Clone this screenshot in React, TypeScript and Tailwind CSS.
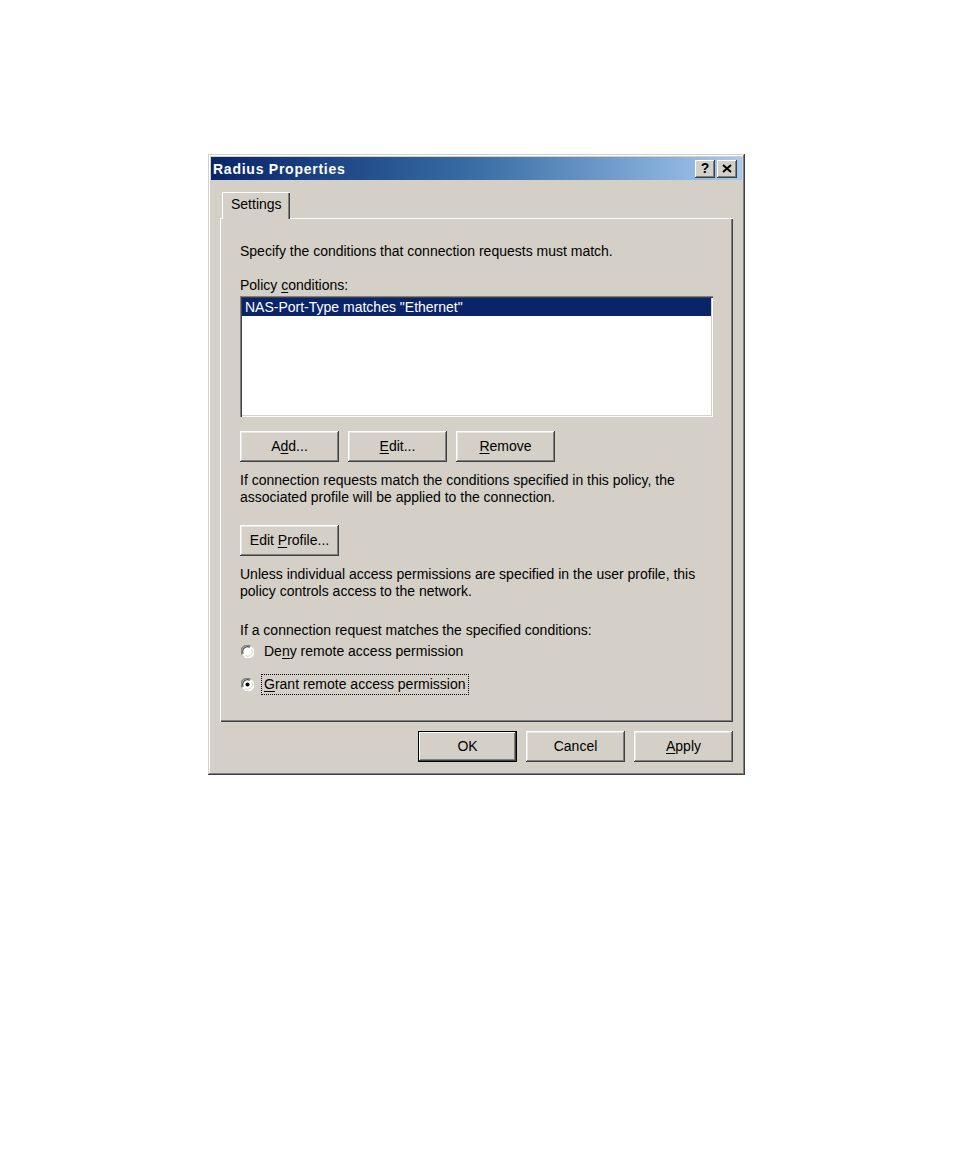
import React from "react";

const font = { fontFamily: '"Liberation Sans", Arial, sans-serif' };

function Btn({
  children,
  w = "w-[99px]",
  def = false,
}: {
  children: React.ReactNode;
  w?: string;
  def?: boolean;
}) {
  return (
    <div
      className={`${w} h-[31px] flex items-center justify-center bg-[#d4d0c8] text-[14px] leading-[17px] text-black ${
        def
          ? "border border-black shadow-[inset_-1px_-1px_#404040,inset_1px_1px_#fff,inset_-2px_-2px_#808080]"
          : "shadow-[inset_-1px_-1px_#404040,inset_1px_1px_#fff,inset_-2px_-2px_#808080,inset_2px_2px_#e8e6e2]"
      }`}
    >
      <span>{children}</span>
    </div>
  );
}

function Radio({ checked }: { checked?: boolean }) {
  return (
    <svg width="13" height="13" viewBox="0 0 13 13" className="shrink-0">
      <circle cx="6.5" cy="6.5" r="6" fill="#ffffff" />
      <path d="M1.2 9.5 A6 6 0 0 1 9.5 1.2" stroke="#808080" strokeWidth="1.3" fill="none" />
      <path d="M2.3 8.8 A4.8 4.8 0 0 1 8.8 2.3" stroke="#404040" strokeWidth="1.1" fill="none" />
      <path d="M11.8 3.5 A6 6 0 0 1 3.5 11.8" stroke="#ffffff" strokeWidth="1.2" fill="none" />
      <path d="M10.7 4.2 A4.8 4.8 0 0 1 4.2 10.7" stroke="#d4d0c8" strokeWidth="1" fill="none" />
      {checked && <circle cx="6.5" cy="6.5" r="2" fill="#000" />}
    </svg>
  );
}

export default function App() {
  return (
    <div className="min-h-[1155px] w-full bg-white pl-[208px] pt-[154px]" style={font}>
      <div className="w-[537px] h-[621px] p-[3px] flex flex-col bg-[#d4d0c8] shadow-[inset_-1px_-1px_#404040,inset_1px_1px_#d4d0c8,inset_-2px_-2px_#808080,inset_2px_2px_#ffffff]">
        {/* Title bar */}
        <div className="h-[23px] flex items-center justify-between pl-[2px] pr-[5px] bg-linear-to-r from-[#0a246a] via-[#3a6ea5] to-[#a6caf0]">
          <span className="text-white font-bold text-[14px] tracking-[0.75px] leading-none">
            Radius Properties
          </span>
          <div className="flex gap-[2px]">
            <div className="w-[20px] h-[18px] flex items-center justify-center bg-[#d4d0c8] shadow-[inset_-1px_-1px_#404040,inset_1px_1px_#fff,inset_-2px_-2px_#808080] text-[14px] font-bold text-black leading-none pb-[1px]">
              ?
            </div>
            <div className="w-[20px] h-[18px] flex items-center justify-center bg-[#d4d0c8] shadow-[inset_-1px_-1px_#404040,inset_1px_1px_#fff,inset_-2px_-2px_#808080]">
              <svg width="10" height="9" viewBox="0 0 10 9">
                <path d="M1 1 L9 8 M9 1 L1 8" stroke="#000" strokeWidth="2" />
              </svg>
            </div>
          </div>
        </div>

        {/* Body */}
        <div className="flex flex-col px-[9px] pt-[12px]">
          {/* Tab */}
          <div className="relative z-10 ml-[2px] -mb-[1px] w-[68px] h-[27px] bg-[#d4d0c8] shadow-[inset_1px_1px_#fff,inset_-1px_0_#404040,inset_-2px_0_#808080] pl-[9px] pt-[4px] text-[14px] leading-[17px] text-black">
            Settings
          </div>
          {/* Panel */}
          <div className="h-[504px] w-full bg-[#d4d0c8] shadow-[inset_1px_1px_#fff,inset_-1px_-1px_#404040,inset_-2px_-2px_#808080] px-[20px] pt-[25px] text-[14px] leading-[17px] text-black flex flex-col">
            <p>Specify the conditions that connection requests must match.</p>
            <p className="mt-[17px]">
              Policy <u className="underline-offset-2">c</u>onditions:
            </p>
            <div className="mt-[2px] h-[121px] w-full bg-white p-[2px] shadow-[inset_1px_1px_#808080,inset_2px_2px_#404040,inset_-1px_-1px_#fff,inset_-2px_-2px_#d4d0c8]">
              <div className="h-[18px] bg-[#0a246a] text-white pl-[3px] leading-[18px]">
                NAS-Port-Type matches "Ethernet"
              </div>
            </div>
            <div className="mt-[14px] flex gap-[9px]">
              <Btn>
                A<u className="underline-offset-2">d</u>d...
              </Btn>
              <Btn>
                <u className="underline-offset-2">E</u>dit...
              </Btn>
              <Btn>
                <u className="underline-offset-2">R</u>emove
              </Btn>
            </div>
            <p className="mt-[10px]">
              If connection requests match the conditions specified in this policy, the
              <br />
              associated profile will be applied to the connection.
            </p>
            <div className="mt-[19px]">
              <Btn>
                Edit <u className="underline-offset-2">P</u>rofile...
              </Btn>
            </div>
            <p className="mt-[10px]">
              Unless individual access permissions are specified in the user profile, this
              <br />
              policy controls access to the network.
            </p>
            <p className="mt-[22px]">If a connection request matches the specified conditions:</p>
            <div className="mt-[4px] flex items-center h-[17px] pl-[1px]">
              <Radio />
              <span className="ml-[10px]">
                De<u className="underline-offset-2">n</u>y remote access permission
              </span>
            </div>
            <div className="mt-[16px] flex items-center h-[17px] pl-[1px]">
              <Radio checked />
              <span className="ml-[7px] px-[2px] py-[1px] border border-dotted border-black">
                <u className="underline-offset-2">G</u>rant remote access permission
              </span>
            </div>
          </div>
          {/* Bottom buttons */}
          <div className="mt-[9px] flex justify-end gap-[9px]">
            <Btn def>OK</Btn>
            <Btn>Cancel</Btn>
            <Btn>
              <u className="underline-offset-2">A</u>pply
            </Btn>
          </div>
        </div>
      </div>
    </div>
  );
}
